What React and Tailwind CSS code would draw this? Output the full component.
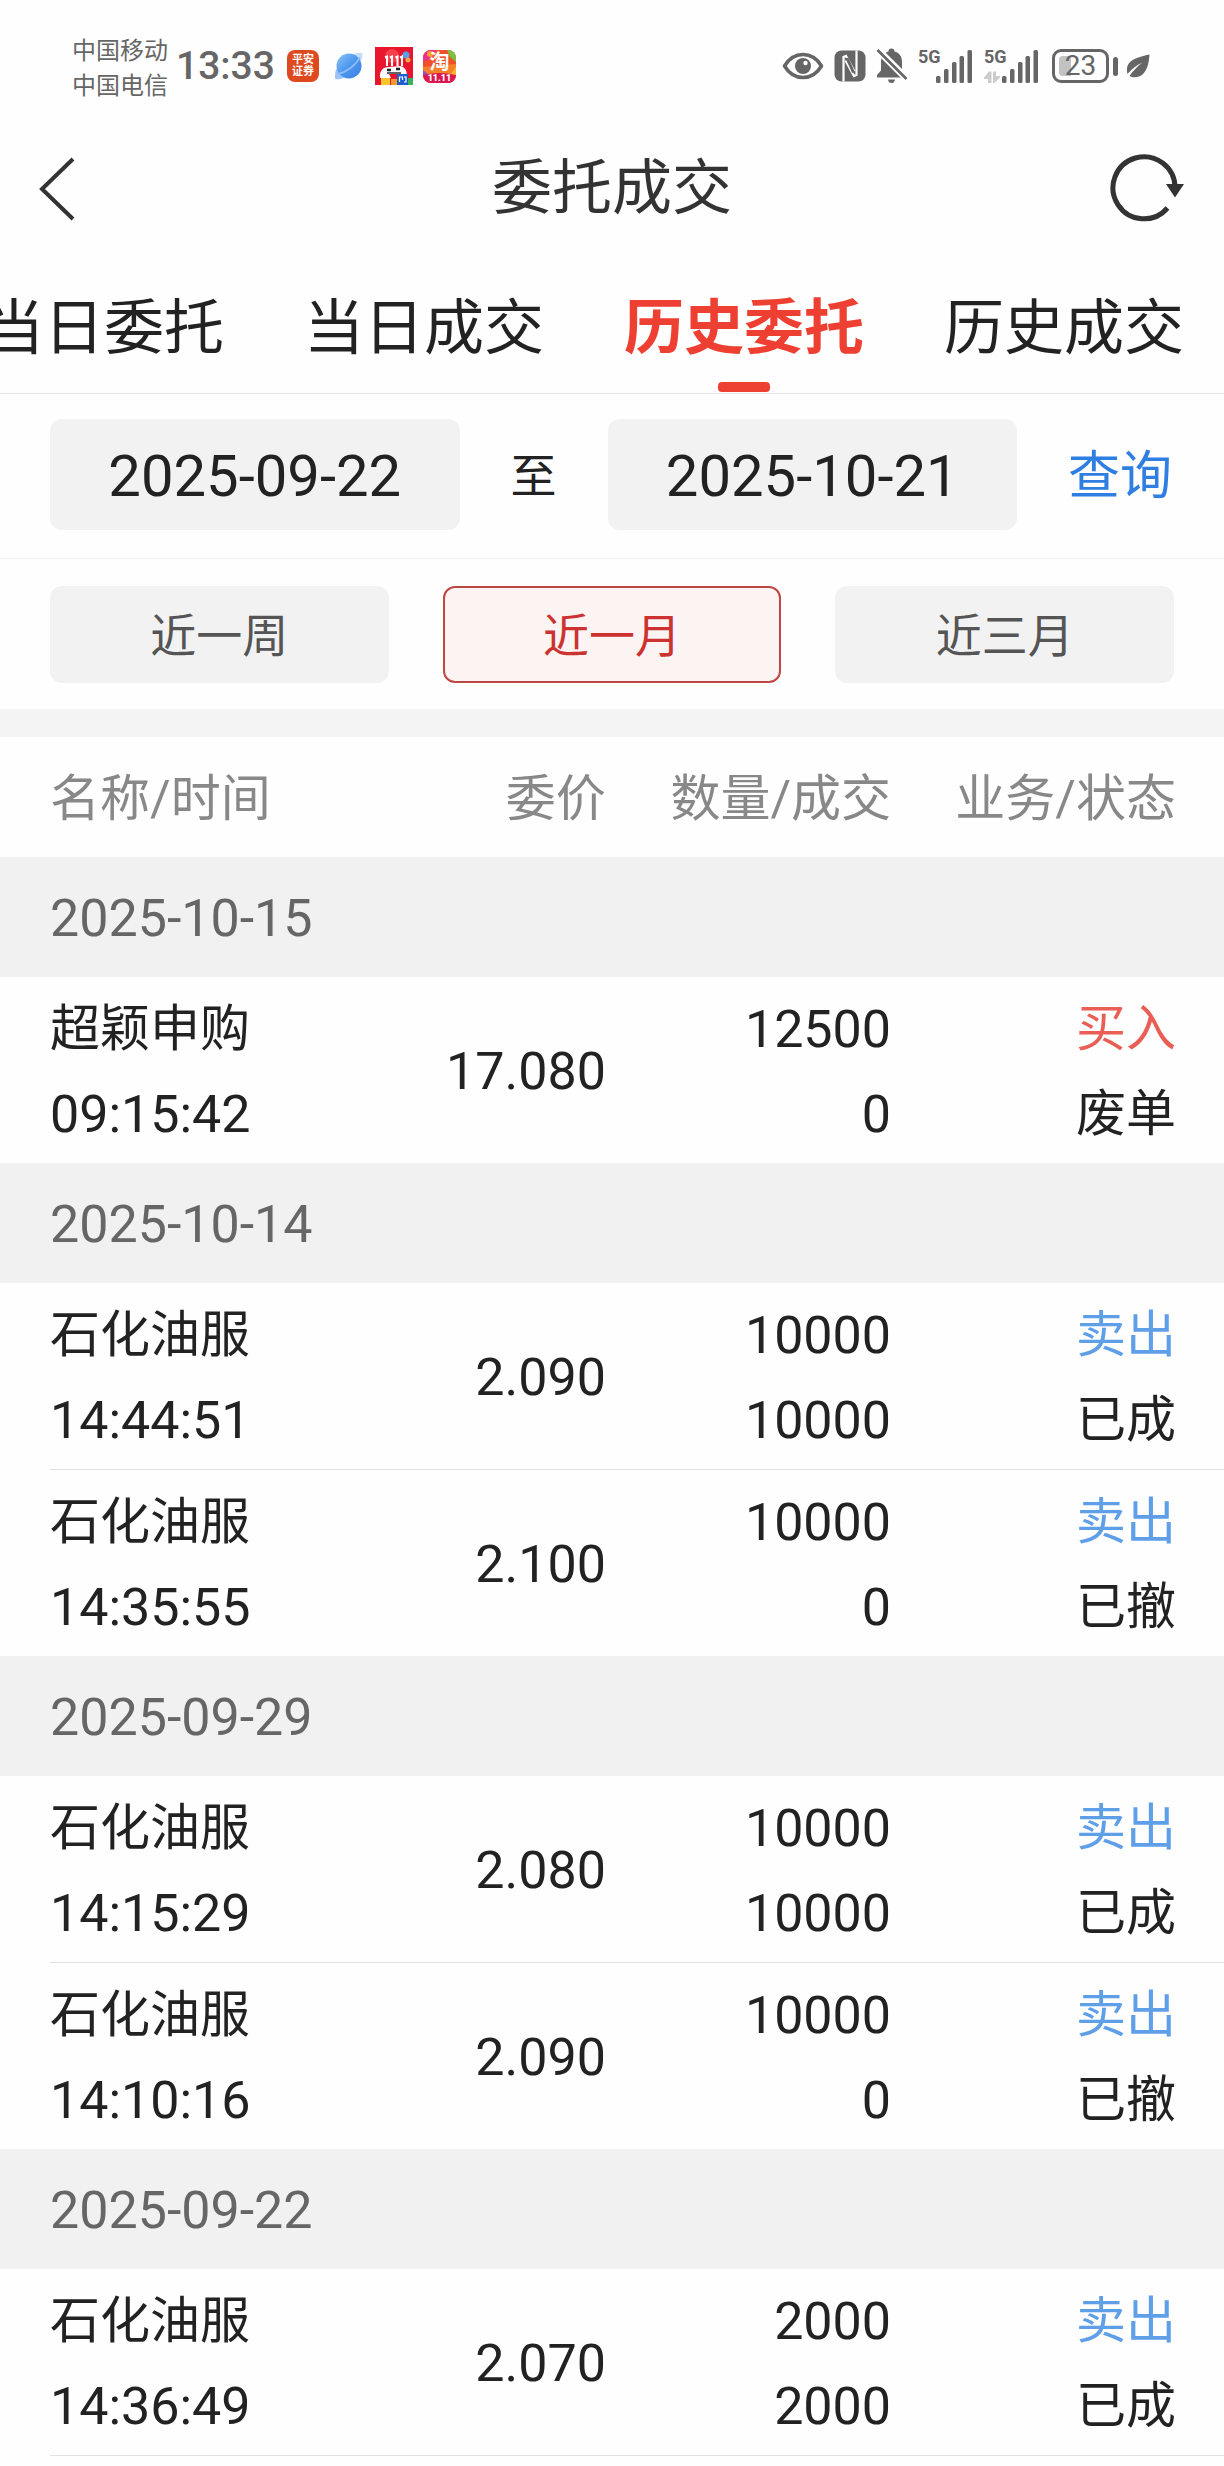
import { useState } from "react";

const FONT = "font-['Roboto','Noto_Sans_CJK_SC',sans-serif]";

const TABS = ["当日委托", "当日成交", "历史委托", "历史成交"];
const PERIODS = ["近一周", "近一月", "近三月"];

const GROUPS = [
  {
    date: "2025-10-15",
    orders: [
      { name: "超颖申购", time: "09:15:42", price: "17.080", qty: "12500", filled: "0", side: "买入", status: "废单" },
    ],
  },
  {
    date: "2025-10-14",
    orders: [
      { name: "石化油服", time: "14:44:51", price: "2.090", qty: "10000", filled: "10000", side: "卖出", status: "已成" },
      { name: "石化油服", time: "14:35:55", price: "2.100", qty: "10000", filled: "0", side: "卖出", status: "已撤" },
    ],
  },
  {
    date: "2025-09-29",
    orders: [
      { name: "石化油服", time: "14:15:29", price: "2.080", qty: "10000", filled: "10000", side: "卖出", status: "已成" },
      { name: "石化油服", time: "14:10:16", price: "2.090", qty: "10000", filled: "0", side: "卖出", status: "已撤" },
    ],
  },
  {
    date: "2025-09-22",
    more: true,
    orders: [
      { name: "石化油服", time: "14:36:49", price: "2.070", qty: "2000", filled: "2000", side: "卖出", status: "已成" },
    ],
  },
];

function PinganIcon() {
  return (
    <span className="grid h-8 w-8 place-content-center rounded-lg bg-[#dd4a20] text-center text-[11px] leading-[12px] font-bold text-white">
      <span>平安</span>
      <span>证券</span>
    </span>
  );
}

function BrowserIcon() {
  return (
    <svg className="h-7 w-7" viewBox="0 0 28 28" aria-hidden="true">
      <defs>
        <linearGradient id="globe" x1="0" y1="0" x2="1" y2="1">
          <stop offset="0" stopColor="#8fc4fb" />
          <stop offset="0.5" stopColor="#4c97ee" />
          <stop offset="1" stopColor="#3f7fe6" />
        </linearGradient>
      </defs>
      <path d="M17 3C21 .5 26.500 0 27.500 1.500C28 5 26 10 23 13Z" fill="#c9dcf8" />
      <path d="M1 17C0 21-.5 26 .5 27C4 28 9 26 12 24Z" fill="#9cc4f8" />
      <circle cx="14" cy="14" r="12.500" fill="url(#globe)" />
      <path d="M3 22C12 20 21 13 25 5" fill="none" stroke="#8fc0fa" strokeWidth="1.600" />
    </svg>
  );
}

function MallIcon() {
  return (
    <svg className="h-[38px] w-[38px]" viewBox="0 0 38 38" aria-hidden="true">
      <rect width="38" height="38" fill="#e8152c" />
      <circle cx="17" cy="9" r="7" fill="#f5404c" />
      <circle cx="31" cy="8" r="3.500" fill="#5b9fe8" />
      <circle cx="33" cy="13" r="2.500" fill="#f4a545" />
      <path d="M5 31C4 23 9 20 14 20L25 19C31 20 33 26 31 31Z" fill="#fff" />
      <path d="M10 10.500L12 9.500V19M15 10.500L17 9.500V19M20.500 10.500L22.500 9.500V19M25 10.500L27 9.500V19" fill="none" stroke="#fff" strokeWidth="2" />
      <path d="M12 23h4M21 22h4" stroke="#222" strokeWidth="2.400" />
      <path d="M14 27h10l-1 4h-7Z" fill="#e8152c" />
      <path d="M12 26h14" stroke="#222" strokeWidth="1.400" />
      <rect x="6" y="31" width="9" height="7" fill="#f8c62c" />
      <rect x="16" y="32" width="6" height="6" fill="#f39a2b" />
      <rect x="22" y="27" width="11" height="11" fill="#1d5fd0" />
      <path d="M24.500 35v-5h3v3M29 30h2v5h-2" fill="none" stroke="#fff" strokeWidth="1.200" />
      <rect x="33" y="31" width="5" height="7" fill="#39b257" />
    </svg>
  );
}

function TaobaoIcon() {
  return (
    <span className="relative block h-[33px] w-[33px] overflow-hidden rounded-lg bg-[#ef4f2a] text-center text-white">
      <svg className="absolute inset-0 h-full w-full" viewBox="0 0 33 33" aria-hidden="true">
        <path d="M0 0H13L6 9L0 12Z" fill="#e9308b" />
        <circle cx="7" cy="4" r="3" fill="#f7a32a" />
        <path d="M24 0H33V12L27 7Z" fill="#7ac143" />
        <path d="M0 17L33 14V26H0Z" fill="#f5802c" />
        <path d="M0 20L6 25H0Z" fill="#9a49c8" />
        <path d="M33 17L27 25H33Z" fill="#f9b52e" />
        <path d="M0 25Q16 21 33 25V33H0Z" fill="#dc1650" />
      </svg>
      <span className="relative block text-[20px] leading-[24px] font-bold">淘</span>
      <span className="relative block text-[9px] leading-[8px] font-black">11.11</span>
    </span>
  );
}

function EyeIcon() {
  return (
    <svg className="h-7 w-[42px]" viewBox="0 0 42 28" aria-hidden="true">
      <path d="M2.500 14C7 6.500 13.500 2.500 21 2.500S35 6.500 39.500 14C35 21.500 28.500 25.500 21 25.500S7 21.500 2.500 14Z" fill="none" stroke="#666" strokeWidth="3.600" strokeLinejoin="round" />
      <circle cx="21" cy="14" r="8" fill="#666" />
      <circle cx="23.500" cy="11" r="2.200" fill="#fff" />
    </svg>
  );
}

function NfcIcon() {
  return (
    <svg className="h-8 w-8" viewBox="0 0 32 32" aria-hidden="true">
      <rect x="0.500" y="0.500" width="31" height="31" rx="7" fill="#666" />
      <path d="M9.500 31.500V7L12 6L20.500 21.500" fill="none" stroke="#fff" strokeWidth="2.200" />
      <path d="M22.500.5V25L20 26L11.500 10.500" fill="none" stroke="#fff" strokeWidth="2.200" />
      <path d="M13 8L19.500 22.500" stroke="#666" strokeWidth="3" />
    </svg>
  );
}

function MutedBellIcon() {
  return (
    <svg className="h-9 w-8" viewBox="0 0 32 36" aria-hidden="true">
      <path d="M1 29.500V27L5 22.500V14C5 8 8.500 4.500 12.500 3.500Q12.500.5 15.500.5T18.500 3.500C23 4.500 26 8 26 14V22L28 25L29 29.500Z" fill="#666" />
      <path d="M12 31.500H19Q18.500 35 15.500 35T12 31.500Z" fill="#666" />
      <path d="M0 0L32 32" stroke="#fff" strokeWidth="7" />
      <path d="M1.500 2L30.500 31" stroke="#666" strokeWidth="2.600" />
    </svg>
  );
}

function Signal({ data }) {
  return (
    <span className="relative block h-9 w-[54px]">
      <span className="absolute top-0 left-0 text-[18px] leading-[18px] font-bold">5G</span>
      <svg className="h-full w-full" viewBox="0 0 54 36" aria-hidden="true">
        <g fill="#666">
          <rect x="18" y="28" width="4.500" height="7" rx="1.500" />
          <rect x="26" y="21" width="4.500" height="14" rx="1.500" />
          <rect x="34" y="14" width="4.500" height="21" rx="1.500" />
          <rect x="41.500" y="8" width="4.500" height="27" rx="1.500" />
          <rect x="49.500" y="2" width="4.500" height="33" rx="1.500" />
        </g>
        {data && (
          <path d="M7.500 35V23.500H5L0 29.500V31H4V35ZM9 23.500V35H10.500L16 29.500V28H12V23.500Z" fill="#ccc" />
        )}
      </svg>
    </span>
  );
}

function Battery() {
  return (
    <span className="flex items-center gap-1">
      <span className="relative flex h-[34px] w-[57px] items-center justify-center rounded-[9px] border-3 border-[#666]">
        <span className="absolute inset-y-1 left-1 w-3 rounded-l bg-[#c2c2c2]" />
        <span className="relative text-[28px] leading-7">23</span>
      </span>
      <span className="h-[19px] w-[5px] rounded-sm bg-[#666]" />
    </span>
  );
}

function LeafIcon() {
  return (
    <svg className="h-6 w-6" viewBox="0 0 24 24" aria-hidden="true">
      <path d="M23.500.5C14 2.500 4 5 1.500 12C.5 15 1 18 1.500 20C6 15 10 11.500 16.500 8.500C11 12.500 7 17 3.500 22C7 24 13 24 17 20C22 15 23 7 23.500.5Z" fill="#666" />
    </svg>
  );
}

function StatusBar() {
  return (
    <div className="flex h-[132px] items-center justify-between pr-[74px] pl-[72px] text-[#666]">
      <div className="flex items-center">
        <div className="pt-1.5 text-[24px] leading-[35px]">
          <p>中国移动</p>
          <p>中国电信</p>
        </div>
        <time className="ml-2 text-[39px] leading-none font-medium">13:33</time>
        <div className="ml-3 flex items-center">
          <PinganIcon />
          <span className="ml-4"><BrowserIcon /></span>
          <span className="ml-3"><MallIcon /></span>
          <span className="ml-2.5"><TaobaoIcon /></span>
        </div>
      </div>
      <div className="flex items-center">
        <EyeIcon />
        <span className="ml-2.5"><NfcIcon /></span>
        <span className="ml-2.5"><MutedBellIcon /></span>
        <span className="ml-2.5"><Signal /></span>
        <span className="ml-3"><Signal data /></span>
        <span className="ml-3.5"><Battery /></span>
        <span className="ml-2"><LeafIcon /></span>
      </div>
    </div>
  );
}

function TitleBar() {
  return (
    <header className="flex h-[114px] items-center justify-between pr-10 pl-9 text-[#333]">
      <button type="button" aria-label="返回" className="w-[78px]">
        <svg className="h-16 w-10" viewBox="0 0 40 64" fill="none" stroke="#333" strokeWidth="4" aria-hidden="true">
          <path d="M37 2L6 32L37 62" />
        </svg>
      </button>
      <h1 className="text-[60px] leading-[80px]">委托成交</h1>
      <button type="button" aria-label="刷新">
        <svg className="h-[74px] w-[74px]" viewBox="0 0 74 74" fill="none" aria-hidden="true">
          <path d="M65 36A31 31 0 1 0 57.500 56" stroke="#333" strokeWidth="5" />
          <path d="M56 32H74L65 45.500Z" fill="#333" />
        </svg>
      </button>
    </header>
  );
}

function Tabs() {
  const [active, setActive] = useState("历史委托");
  return (
    <div role="tablist" className="flex justify-end gap-20 overflow-hidden border-b border-[#e6e6e6] pt-12 pr-10">
      {TABS.map((tab) => {
        const on = tab === active;
        return (
          <button
            key={tab}
            type="button"
            role="tab"
            aria-selected={on}
            onClick={() => setActive(tab)}
            className={`flex shrink-0 flex-col items-center text-[60px] leading-[70px] ${on ? "font-bold text-[#ee4032]" : "text-[#222]"}`}
          >
            {tab}
            <span className={`mt-[18px] mb-px h-2.5 w-[52px] rounded ${on ? "bg-[#ee4032]" : ""}`} />
          </button>
        );
      })}
    </div>
  );
}

function DateFilter() {
  const box = "h-[111px] min-w-0 flex-1 rounded-xl bg-[#f2f2f2] pt-0.5 text-center text-[58px] text-[#222] outline-none";
  return (
    <form
      onSubmit={(e) => e.preventDefault()}
      className="flex items-center gap-[51px] border-b border-[#f0f0f0] pr-[52px] pl-[50px] pt-[25px] pb-7"
    >
      <input type="text" aria-label="开始日期" readOnly value="2025-09-22" className={box} />
      <span className="pt-0.5 text-[46px] leading-none text-[#222]">至</span>
      <input type="text" aria-label="结束日期" readOnly value="2025-10-21" className={box} />
      <button type="submit" className="pt-1 text-[52px] leading-none text-[#2f7fe2]">查询</button>
    </form>
  );
}

function PeriodFilter() {
  const [period, setPeriod] = useState("近一月");
  return (
    <div className="grid grid-cols-3 gap-[54px] px-[50px] pt-[27px] pb-[26px]">
      {PERIODS.map((p) => {
        const on = p === period;
        return (
          <button
            key={p}
            type="button"
            aria-pressed={on}
            onClick={() => setPeriod(p)}
            className={`h-[97px] rounded-xl pt-1 text-[46px] ${on ? "border-2 border-[#bf4744] bg-[#fcf3f3] text-[#cc3330]" : "bg-[#f2f2f2] text-[#555]"}`}
          >
            {p}
          </button>
        );
      })}
    </div>
  );
}

function OrderRow({ order, divided }) {
  const line = divided ? "border-b border-[#e2e2e2]" : "";
  const cell = `pt-2.5 pb-1.5 leading-[85px] ${line}`;
  return (
    <tr className="text-[#222]">
      <td className="p-0 pl-[50px]">
        <div className={cell}>
          <p className="text-[50px]">{order.name}</p>
          <p className="text-[52px]">{order.time}</p>
        </div>
      </td>
      <td className="p-0 text-right text-[52px]">
        <div className={`pt-[52px] pb-12 leading-[86px] ${line}`}>{order.price}</div>
      </td>
      <td className="p-0 text-right text-[52px]">
        <div className={cell}>
          <p>{order.qty}</p>
          <p>{order.filled}</p>
        </div>
      </td>
      <td className="p-0 text-right text-[50px]">
        <div className={`pr-12 ${cell}`}>
          <p className={order.side === "买入" ? "text-[#ea5f55]" : "text-[#5f9fe8]"}>{order.side}</p>
          <p>{order.status}</p>
        </div>
      </td>
    </tr>
  );
}

function OrderTable() {
  return (
    <table className="w-full table-fixed border-collapse">
      <colgroup>
        <col className="w-[30%]" />
        <col className="w-[19.5%]" />
        <col className="w-[23.3%]" />
        <col />
      </colgroup>
      <thead>
        <tr className="h-[120px] text-[50px] text-[#888]">
          <th scope="col" className="p-0 pt-1 pl-[50px] text-left font-normal">名称/时间</th>
          <th scope="col" className="p-0 pt-1 text-right font-normal">委价</th>
          <th scope="col" className="p-0 pt-1 text-right font-normal">数量/成交</th>
          <th scope="col" className="p-0 pt-1 pr-12 text-right font-normal">业务/状态</th>
        </tr>
      </thead>
      {GROUPS.map((g) => (
        <tbody key={g.date}>
          <tr className="h-[120px] bg-[#f1f1f1]">
            <th scope="rowgroup" colSpan={4} className="p-0 pt-1 pl-[50px] text-left text-[52px] font-normal text-[#666]">
              {g.date}
            </th>
          </tr>
          {g.orders.map((o, i) => (
            <OrderRow key={o.time} order={o} divided={i < g.orders.length - 1 || g.more} />
          ))}
        </tbody>
      ))}
    </table>
  );
}

export default function App() {
  return (
    <div className={`min-h-screen overflow-hidden bg-[#fefefe] ${FONT}`}>
      <StatusBar />
      <TitleBar />
      <Tabs />
      <DateFilter />
      <PeriodFilter />
      <div className="h-7 bg-[#f4f4f4]" />
      <OrderTable />
    </div>
  );
}
